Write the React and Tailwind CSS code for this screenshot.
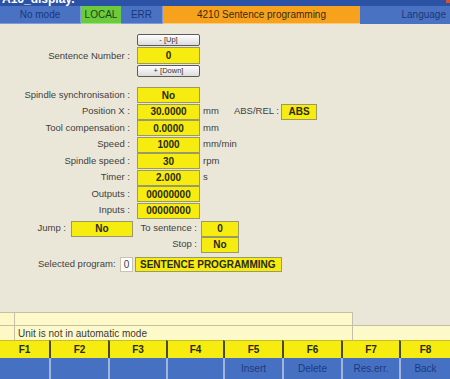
import React from "react";

const rows = [
  { label: "Spindle synchronisation :", value: "No" },
  { label: "Position X :", value: "30.0000", unit: "mm", absRel: true },
  { label: "Tool compensation :", value: "0.0000", unit: "mm" },
  { label: "Speed :", value: "1000", unit: "mm/min" },
  { label: "Spindle speed :", value: "30", unit: "rpm" },
  { label: "Timer :", value: "2.000", unit: "s" },
  { label: "Outputs :", value: "00000000" },
  { label: "Inputs :", value: "00000000" },
];

const fkeys = [
  { key: "F1", label: "", w: "w-[49px]" },
  { key: "F2", label: "", w: "w-[59px]" },
  { key: "F3", label: "", w: "w-[58px]" },
  { key: "F4", label: "", w: "w-[57px]" },
  { key: "F5", label: "Insert", w: "w-[59px]" },
  { key: "F6", label: "Delete", w: "w-[59px]" },
  { key: "F7", label: "Res.err.", w: "w-[58px]" },
  { key: "F8", label: "Back", w: "w-[51px]" },
];

const YBox = ({ children, className = "" }) => (
  <div
    className={`flex items-center justify-center bg-[#f7ec10] border border-[#9a9a66] font-bold text-[10px] text-[#2a2a10] ${className}`}
  >
    {children}
  </div>
);

const NavButton = ({ children }) => (
  <div className="w-[63px] h-[12px] flex items-center justify-center rounded-[2px] border border-[#5a5a5a] bg-gradient-to-b from-white to-[#dcdcdc] text-[7.5px] text-[#333] leading-none">
    {children}
  </div>
);

export default function App() {
  return (
    <div className="w-[450px] h-[379px] overflow-hidden flex flex-col bg-[#ebe7d8] font-['Liberation_Sans',Arial,sans-serif] text-[#404040]">
      {/* window title, cut off by the screenshot */}
      <div className="h-[6px] overflow-hidden bg-[#2c52a6] flex justify-between">
        <div className="-mt-[7px] pl-[2px] text-[12px] font-bold text-white leading-[12px]">
          A16_display.
        </div>
        <div className="w-[4px] h-[3px] bg-[#d9502a]" />
      </div>

      {/* status header */}
      <div className="h-[18px] bg-[#4a72c2] flex items-stretch text-[10px] leading-none">
        <div className="w-[81px] flex items-center justify-center border-b border-r border-[#7e9cdc] text-[#1a367a]">
          No mode
        </div>
        <div className="w-[40px] flex items-center justify-center bg-[#6ccb3c] border-b border-[#9ee07a] text-[#1c4512]">
          LOCAL
        </div>
        <div className="w-[42px] flex items-center justify-center border-b border-r border-[#7e9cdc] text-[#1a367a]">
          ERR
        </div>
        <div className="w-[197px] flex items-center justify-center bg-[#f7a21d] border-b border-[#fbc87a] text-[#3b2a08]">
          4210 Sentence programming
        </div>
        <div className="flex-1 flex items-center justify-end pr-[4px] text-[#1a367a]">
          Language
        </div>
      </div>

      {/* main form */}
      <div className="flex-1 flex flex-col pt-[10px] text-[9.5px]">
        <div className="flex">
          <div className="w-[133px] pr-[3px] pt-[2px] flex items-center justify-end">
            Sentence Number :
          </div>
          <div className="ml-[4px] flex flex-col gap-[1px]">
            <NavButton>- [Up]</NavButton>
            <YBox className="w-[63px] h-[17px]">0</YBox>
            <NavButton>+ [Down]</NavButton>
          </div>
        </div>

        <div className="mt-[10px] flex flex-col gap-[0.5px]">
          {rows.map((r) => (
            <div key={r.label} className="flex items-center h-[16px]">
              <div className="w-[133px] pr-[3px] text-right">{r.label}</div>
              <YBox className="ml-[4px] w-[63px] h-[16px]">{r.value}</YBox>
              <div className="ml-[3px] w-[30px]">{r.unit}</div>
              {r.absRel && (
                <div className="flex items-center">
                  <span className="w-[48px] text-right pr-[2px]">ABS/REL :</span>
                  <YBox className="w-[36px] h-[16px] text-[10.5px]">ABS</YBox>
                </div>
              )}
            </div>
          ))}
        </div>

        <div className="mt-[2px] flex items-center h-[16px]">
          <div className="w-[68px] pr-[2px] text-right">Jump :</div>
          <YBox className="ml-[3px] w-[62px] h-[16px]">No</YBox>
          <div className="w-[68px] pr-[4px] text-right">To sentence :</div>
          <YBox className="w-[38px] h-[16px]">0</YBox>
        </div>
        <div className="flex items-center h-[16px]">
          <div className="w-[201px] pr-[4px] text-right">Stop :</div>
          <YBox className="w-[38px] h-[16px]">No</YBox>
        </div>

        <div className="mt-[4px] flex items-center h-[15px] pl-[38px]">
          <span className="w-[82px]">Selected program:</span>
          <div className="w-[13px] h-[15px] flex items-center justify-center bg-white border border-[#c8c4b0] text-[10px]">
            0
          </div>
          <div className="ml-[2px] w-[147px] h-[15px] flex items-center pl-[4px] bg-[#f7ec10] border border-[#9a9a66] font-bold text-[10px] text-[#2a2a10]">
            SENTENCE PROGRAMMING
          </div>
        </div>
      </div>

      {/* message rows */}
      <div className="flex h-[13px]">
        <div className="w-[15px] bg-[#fdf8c6] border-t border-r border-[#c4c0a8]" />
        <div className="w-[338px] bg-[#fef9c8] border-t border-r border-[#c4c0a8]" />
        <div className="flex-1" />
      </div>
      <div className="flex h-[15px] text-[10px] text-[#3a3a3a]">
        <div className="w-[15px] bg-[#fdf8c6] border-t border-r border-[#c4c0a8]" />
        <div className="w-[338px] bg-[#fef9c8] border-t border-r border-[#c4c0a8] flex items-center pl-[3px]">
          Unit is not in automatic mode
        </div>
        <div className="flex-1 bg-[#fef9c8] border-t border-[#c4c0a8]" />
      </div>

      {/* function keys */}
      <div className="flex h-[39px]">
        {fkeys.map((f, i) => (
          <div key={f.key} className={`${f.w} flex flex-col`}>
            <div
              className={`h-[18px] bg-[#f7ec10] border-t border-[#c8bf30] flex items-center justify-center font-bold text-[10px] text-[#2a2a10] ${
                i > 0 ? "border-l-2 border-l-[#4a4a20]" : ""
              }`}
            >
              {f.key}
            </div>
            <div
              className={`h-[21px] bg-[#4671c2] flex items-center justify-center text-[10px] text-[#1c3a80] ${
                i > 0 ? "border-l-2 border-l-[#9fb4dc]" : ""
              }`}
            >
              {f.label}
            </div>
          </div>
        ))}
      </div>
    </div>
  );
}
